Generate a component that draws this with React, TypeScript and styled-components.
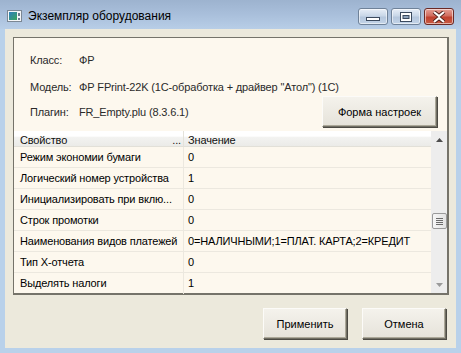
import React from "react";
import styled, { createGlobalStyle } from "styled-components";

const GlobalStyle = createGlobalStyle`
  html, body {
    margin: 0;
    padding: 0;
    background: #b9d1ea;
  }
  * {
    box-sizing: border-box;
  }
`;

const uiFont = `"Liberation Sans", Arial, sans-serif`;

const rows = [
  { name: "Режим экономии бумаги", value: "0" },
  { name: "Логический номер устройства", value: "1" },
  { name: "Инициализировать при вклю...", value: "0" },
  { name: "Строк промотки", value: "0" },
  { name: "Наименования видов платежей", value: "0=НАЛИЧНЫМИ;1=ПЛАТ. КАРТА;2=КРЕДИТ" },
  { name: "Тип X-отчета", value: "0" },
  { name: "Выделять налоги", value: "1" },
];

export default function App() {
  return (
    <>
      <GlobalStyle />
      <Window>
        <TitleBar>
          <AppIcon viewBox="0 0 15 12">
            <rect x="0.5" y="0.5" width="14" height="11" fill="#f4f6f8" stroke="#7b8794" />
            <defs>
              <linearGradient id="ic" x1="0" y1="0" x2="1" y2="1">
                <stop offset="0" stopColor="#2f7fbf" />
                <stop offset="1" stopColor="#3aa65a" />
              </linearGradient>
            </defs>
            <rect x="2" y="2" width="8" height="8" fill="url(#ic)" />
            <rect x="11" y="3" width="2" height="3" fill="#6a7b8c" />
            <rect x="11" y="8" width="2" height="2" fill="#6a7b8c" />
          </AppIcon>
          <Title>Экземпляр оборудования</Title>
          <CaptionButtons>
            <CaptionButton>
              <svg width="14" height="8" viewBox="0 0 14 8">
                <rect x="0.5" y="4.5" width="13" height="3" fill="#fff" stroke="#3b4a5e" />
              </svg>
            </CaptionButton>
            <CaptionButton>
              <svg width="12" height="10" viewBox="0 0 12 10">
                <rect x="0.5" y="0.5" width="11" height="9" fill="#fff" stroke="#3b4a5e" />
                <rect x="3" y="3.5" width="6" height="3" fill="#8fa4bd" stroke="#3b4a5e" />
              </svg>
            </CaptionButton>
            <CaptionButton $close>
              <svg width="14" height="12" viewBox="0 0 14 12">
                <path
                  d="M2 1 L7 5 L12 1 M2 11 L7 7 L12 11"
                  stroke="#4a1f1a"
                  strokeWidth="4"
                  fill="none"
                />
                <path
                  d="M2 1 L7 5 L12 1 M2 11 L7 7 L12 11"
                  stroke="#fff"
                  strokeWidth="2.2"
                  fill="none"
                />
              </svg>
            </CaptionButton>
          </CaptionButtons>
        </TitleBar>
        <Client>
          <Panel>
            <Info>
              <InfoRow $top={15}>
                <Label>Класс:</Label>
                <Value>ФР</Value>
              </InfoRow>
              <InfoRow $top={14}>
                <Label>Модель:</Label>
                <Value>ФР FPrint-22K (1С-обработка + драйвер "Атол") (1С)</Value>
              </InfoRow>
              <InfoRow $top={3} $tall>
                <Label>Плагин:</Label>
                <Value>FR_Empty.plu (8.3.6.1)</Value>
                <Spacer />
                <Button $width={115}>Форма настроек</Button>
              </InfoRow>
            </Info>
            <Grid>
              <Table>
                <HeaderRow>
                  <HeaderCell $first>
                    <span>Свойство</span>
                    <Dots>...</Dots>
                  </HeaderCell>
                  <HeaderCell>Значение</HeaderCell>
                </HeaderRow>
                {rows.map((r) => (
                  <Row key={r.name}>
                    <NameCell>{r.name}</NameCell>
                    <ValueCell>{r.value}</ValueCell>
                  </Row>
                ))}
              </Table>
              <ScrollBar>
                <Arrow>
                  <svg width="7" height="4" viewBox="0 0 7 4">
                    <path d="M0 4 L3.5 0 L7 4 Z" fill="#4d4d4d" />
                  </svg>
                </Arrow>
                <Track>
                  <Thumb>
                    <Grip />
                    <Grip />
                    <Grip />
                    <Grip />
                  </Thumb>
                </Track>
                <Arrow>
                  <svg width="7" height="4" viewBox="0 0 7 4">
                    <path d="M0 0 L3.5 4 L7 0 Z" fill="#9a9a9a" />
                  </svg>
                </Arrow>
              </ScrollBar>
            </Grid>
          </Panel>
          <Footer>
            <Button $width={84}>Применить</Button>
            <Button $width={84}>Отмена</Button>
          </Footer>
        </Client>
      </Window>
    </>
  );
}

const Window = styled.div`
  width: 461px;
  height: 353px;
  display: flex;
  flex-direction: column;
  background: #b9d1ea;
  padding: 0 5px 5px 5px;
  font-family: ${uiFont};
  font-size: 11px;
  letter-spacing: -0.15px;
  color: #000;
`;

const TitleBar = styled.div`
  height: 29px;
  margin: 0 -5px;
  padding: 0 7px;
  display: flex;
  align-items: center;
  background: linear-gradient(#9db3cf, #a9bfdb 50%, #b8cee7);
`;

const AppIcon = styled.svg`
  width: 15px;
  height: 12px;
  margin-top: 3px;
`;

const Title = styled.div`
  margin-left: 6px;
  margin-top: 3px;
  font-size: 12px;
  letter-spacing: 0;
  color: #000;
`;

const CaptionButtons = styled.div`
  margin-left: auto;
  display: flex;
  gap: 3px;
  align-self: flex-start;
  margin-top: 8px;
`;

const CaptionButton = styled.div<{ $close?: boolean }>`
  width: 30px;
  height: 17px;
  border-radius: 3px;
  border: 1px solid ${(p) => (p.$close ? "#6b2a25" : "#6f8299")};
  background: ${(p) =>
    p.$close
      ? "linear-gradient(#e6a096, #d16d5f 45%, #c0412f 55%, #c95b43)"
      : "linear-gradient(#e7eef7, #c9d7e8 45%, #b5c7dd 55%, #c3d4e8)"};
  box-shadow: inset 0 0 0 1px rgba(255, 255, 255, 0.55);
  display: flex;
  align-items: center;
  justify-content: center;
`;

const Client = styled.div`
  flex: 1;
  background: #ece9dc;
  display: flex;
  flex-direction: column;
  padding: 8px 7px 0 8px;
`;

const Panel = styled.div`
  height: 258px;
  background: #fdf8ee;
  border: 1px solid #75736a;
  border-right-width: 2px;
  border-bottom-width: 2px;
  display: flex;
  flex-direction: column;
`;

const Info = styled.div`
  display: flex;
  flex-direction: column;
  padding-left: 16px;
  padding-right: 10px;
  height: 93px;
`;

const InfoRow = styled.div<{ $top: number; $tall?: boolean }>`
  display: flex;
  align-items: center;
  margin-top: ${(p) => p.$top}px;
  height: ${(p) => (p.$tall ? 31 : 13)}px;
  color: #2a2a2a;
`;

const Label = styled.div`
  width: 49px;
`;

const Value = styled.div`
  white-space: nowrap;
`;

const Spacer = styled.div`
  flex: 1;
`;

const Button = styled.button<{ $width: number }>`
  width: ${(p) => p.$width}px;
  height: 31px;
  font-family: ${uiFont};
  font-size: 11px;
  color: #000;
  background: linear-gradient(#f4f2ec, #e6e3da);
  border: 1px solid;
  border-color: #fcfbf8 #716f64 #716f64 #fcfbf8;
  box-shadow: inset -1px -1px 0 #aca899, 1px 1px 0 #4c4a43;
  padding: 0;
`;

const Grid = styled.div`
  flex: 1;
  display: flex;
  min-height: 0;
`;

const Table = styled.div`
  flex: 1;
  display: flex;
  flex-direction: column;
`;

const HeaderRow = styled.div`
  height: 16px;
  display: flex;
  background: linear-gradient(#ffffff 35%, #f3f3f1 40%, #ebebe8);
  border-bottom: 1px solid #e2e0d8;
`;

const HeaderCell = styled.div<{ $first?: boolean }>`
  display: flex;
  align-items: center;
  padding-left: ${(p) => (p.$first ? 6 : 4)}px;
  width: ${(p) => (p.$first ? "170px" : "auto")};
  flex: ${(p) => (p.$first ? "none" : 1)};
  border-right: ${(p) => (p.$first ? "1px solid #e4e2da" : "none")};
  padding-top: 3px;
  color: #111;
`;

const Dots = styled.span`
  margin-left: auto;
  margin-right: 2px;
`;

const Row = styled.div`
  height: 21px;
  display: flex;
  border-bottom: 1px solid #ece8df;
  &:last-child {
    border-bottom: none;
  }
`;

const NameCell = styled.div`
  width: 170px;
  flex: none;
  padding-left: 6px;
  border-right: 1px solid #ece8df;
  white-space: nowrap;
  line-height: 21px;
`;

const ValueCell = styled.div`
  flex: 1;
  padding-left: 4px;
  line-height: 21px;
  white-space: nowrap;
`;

const ScrollBar = styled.div`
  width: 16px;
  display: flex;
  flex-direction: column;
  background: #ededed;
`;

const Arrow = styled.div`
  height: 17px;
  display: flex;
  align-items: center;
  justify-content: center;
`;

const Track = styled.div`
  flex: 1;
  display: flex;
  flex-direction: column;
  padding-top: 65px;
  align-items: center;
`;

const Thumb = styled.div`
  width: 15px;
  height: 16px;
  border: 1px solid #9a9a9a;
  border-radius: 2px;
  background: linear-gradient(90deg, #f6f6f6, #e3e3e3);
  display: flex;
  flex-direction: column;
  align-items: center;
  justify-content: center;
  gap: 1px;
`;

const Grip = styled.div`
  width: 7px;
  height: 1px;
  background: #6b6b6b;
`;

const Footer = styled.div`
  flex: 1;
  display: flex;
  justify-content: flex-end;
  align-items: flex-start;
  gap: 15px;
  padding-top: 13px;
  padding-right: 3px;
`;
